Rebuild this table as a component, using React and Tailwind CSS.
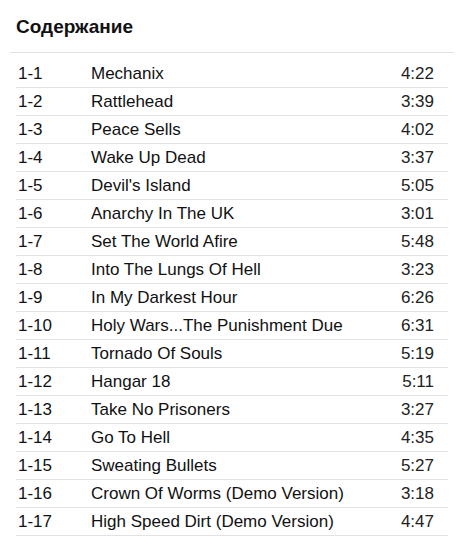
import React from 'react';

const tracks = [
  ['1-1', 'Mechanix', '4:22'],
  ['1-2', 'Rattlehead', '3:39'],
  ['1-3', 'Peace Sells', '4:02'],
  ['1-4', 'Wake Up Dead', '3:37'],
  ['1-5', "Devil's Island", '5:05'],
  ['1-6', 'Anarchy In The UK', '3:01'],
  ['1-7', 'Set The World Afire', '5:48'],
  ['1-8', 'Into The Lungs Of Hell', '3:23'],
  ['1-9', 'In My Darkest Hour', '6:26'],
  ['1-10', 'Holy Wars...The Punishment Due', '6:31'],
  ['1-11', 'Tornado Of Souls', '5:19'],
  ['1-12', 'Hangar 18', '5:11'],
  ['1-13', 'Take No Prisoners', '3:27'],
  ['1-14', 'Go To Hell', '4:35'],
  ['1-15', 'Sweating Bullets', '5:27'],
  ['1-16', 'Crown Of Worms (Demo Version)', '3:18'],
  ['1-17', 'High Speed Dirt (Demo Version)', '4:47'],
];

export default function App() {
  return (
    <div
      className="w-[464px] h-[540px] bg-white overflow-hidden text-[#111]"
      style={{ fontFamily: '"Liberation Sans", Arial, sans-serif' }}
    >
      {/* Heading */}
      <div className="h-[52px] px-4 flex items-center">
        <h1 className="text-[19px] font-bold leading-none">Содержание</h1>
      </div>
      <div className="mx-[10px] h-px bg-[#e0e0e0]" />

      {/* Track list */}
      <div className="mt-[7px] pl-4 pr-4">
        {tracks.map(([num, title, time]) => (
          <div
            key={num}
            className="h-[28px] flex items-center border-b border-[#e2e2e2] text-[17px] leading-none"
          >
            <span className="w-[75px] pl-[2px]">{num}</span>
            <span className="flex-1">{title}</span>
            <span className="pr-[14px] text-[#222]">{time}</span>
          </div>
        ))}
      </div>
    </div>
  );
}
